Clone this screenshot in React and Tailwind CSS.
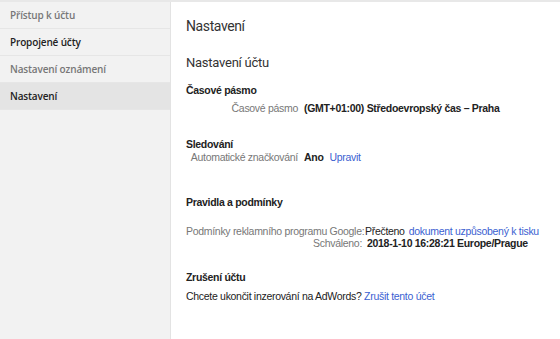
export default function App() {
  const sideItems = [
    { label: 'Přístup k účtu', dim: true },
    { label: 'Propojené účty', dim: false },
    { label: 'Nastavení oznámení', dim: true },
    { label: 'Nastavení', dim: false, active: true },
  ];

  return (
    <div className="flex h-[339px] w-[560px] flex-col bg-[#f2f2f2] font-['Liberation_Sans',Arial,sans-serif] text-[10.5px] tracking-[-0.3px] whitespace-nowrap text-[#222]">
      <div className="h-[2px] bg-[#e8e8e8]" />
      <div className="flex min-h-0 flex-1">
        {/* levý panel */}
        <aside className="w-[171px] shrink-0 border-r border-[#e3e3e3] bg-[#f2f2f2]">
          {sideItems.map((it) => (
            <div
              key={it.label}
              className={`flex h-[27px] items-center border-b border-[#e6e6e6] pl-[10px] font-['Open_Sans',sans-serif] text-[10px] font-semibold tracking-[-0.15px] ${
                it.active ? 'bg-[#e4e4e4] text-[#222]' : it.dim ? 'text-[#777]' : 'text-[#222]'
              }`}
            >
              {it.label}
            </div>
          ))}
        </aside>

        {/* obsah */}
        <main className="flex-1 bg-white pl-[15px] pt-[13px]">
          <h1 className="font-['Roboto',sans-serif] text-[14px] font-normal leading-[22px] tracking-[-0.4px] text-[#333]">Nastavení</h1>
          <h2 className="mt-[17px] font-['Roboto',sans-serif] text-[13px] font-normal leading-[18px] tracking-[-0.25px] text-[#333]">Nastavení účtu</h2>

          <div className="mt-[11px] font-bold leading-[14px]">Časové pásmo</div>
          <div className="mt-[4px] flex leading-[14px]">
            <span className="w-[118px] pr-[6px] text-right text-[#777]">Časové pásmo</span>
            <span className="font-bold">(GMT+01:00) Středoevropský čas – Praha</span>
          </div>

          <div className="mt-[22px] font-bold leading-[14px]">Sledování</div>
          <div className="flex leading-[13px]">
            <span className="w-[118px] pr-[6px] text-right text-[#777]">Automatické značkování</span>
            <span className="font-bold">Ano</span>
            <a className="ml-[6px] text-[#3b5fd1]">Upravit</a>
          </div>

          <div className="mt-[31px] font-bold leading-[14px]">Pravidla a podmínky</div>
          <div className="mt-[16px] flex leading-[12px]">
            <span className="w-[176px] text-right text-[#777]">Podmínky reklamního programu Google:</span>
            <span className="ml-[3px]">Přečteno</span>
            <a className="ml-[4px] text-[#3b5fd1]">dokument uzpůsobený k tisku</a>
          </div>
          <div className="flex leading-[12px]">
            <span className="w-[176px] text-right text-[#777]">Schváleno:</span>
            <span className="ml-[5px] font-bold">2018-1-10 16:28:21 Europe/Prague</span>
          </div>

          <div className="mt-[21px] font-bold leading-[14px]">Zrušení účtu</div>
          <div className="mt-[5px] leading-[14px]">
            Chcete ukončit inzerování na AdWords? <a className="text-[#3b5fd1]">Zrušit tento účet</a>
          </div>
        </main>
      </div>
    </div>
  );
}
